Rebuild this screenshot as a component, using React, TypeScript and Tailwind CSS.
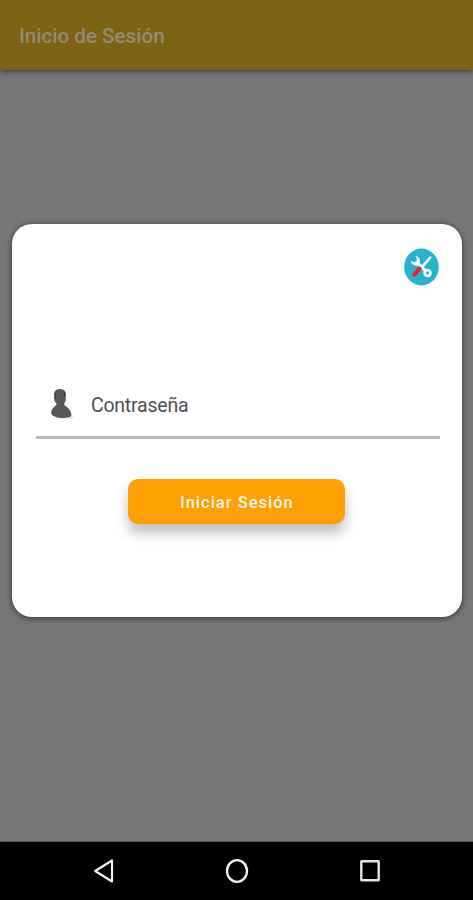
import React, { useState } from 'react'

interface LoginCardProps {
  onSubmit?: (password: string) => void
}

function ToolsIcon() {
  return (
    <svg width="35" height="38" viewBox="0 0 35 38" fill="none">
      <ellipse cx="17.5" cy="19" rx="17.3" ry="18.5" fill="#28b2cc" />
      {/* Screwdriver */}
      <path d="M26.2 9.6L17.5 19.6" stroke="#f4fbfd" strokeWidth="2.6" strokeLinecap="round" />
      {/* Wrench */}
      <path d="M12.5 13.8L22 23.4" stroke="#f4fbfd" strokeWidth="3.2" />
      <path
        d="M11.4 7.9C15.2 8.4 17 11.9 15.5 15.4L13.8 17.4C10.6 18.4 7.2 16.4 6.8 12.8L10 14.2L12.6 13L12.9 10.5Z"
        fill="#f4fbfd"
      />
      <circle cx="23.6" cy="25" r="2.9" stroke="#f4fbfd" strokeWidth="2.8" />
      <path d="M15.6 20.8L10.2 26.6" stroke="#df2b30" strokeWidth="4.2" strokeLinecap="round" />
    </svg>
  )
}

function UserIcon() {
  return (
    <svg width="24" height="32" viewBox="0 0 24 32">
      <path
        d="M10 1C6.4 1 4.2 2.6 4.2 6V11C4.4 13 5.2 14.4 6.4 15.4V17C4 18.8 1.8 20.6 1.3 24C1.1 26 1.6 27.2 3.5 28C7.5 30.2 12 30.6 16 29.8C19 29.4 21.4 29 21.4 27.2C21.2 22.8 18.6 20 14.8 17.8L14.2 15.6C15.2 14 15.8 12.6 15.8 10V6C15.6 2.6 13.6 1 10 1Z"
        fill="#585858"
      />
      <path d="M5.2 10.5V5.6C5.7 4.6 6.3 4 7.2 3.4M14.6 4.4V8" stroke="#333333" fill="none" />
      <path d="M17 30.4C19.5 30.2 22 29.6 23.4 28" stroke="#cfcfcf" fill="none" />
    </svg>
  )
}

function LoginCard({ onSubmit }: LoginCardProps) {
  const [password, setPassword] = useState('')

  const handleSubmit = (e: React.FormEvent) => {
    e.preventDefault()

    if (onSubmit) {
      onSubmit(password)
    }
  }

  return (
    <form
      onSubmit={handleSubmit}
      className="w-[450px] h-[393px] pl-[23.5px] pr-[22.5px] bg-white rounded-[20px] flex flex-col shadow-[0_1px_5px_1px_rgba(0,0,0,0.45)]"
    >
      <div className="flex justify-end pt-6 pr-[1px]">
        <button type="button" aria-label="Configuración">
          <ToolsIcon />
        </button>
      </div>

      {/* Password */}
      <label className="mt-[90px] h-[63.5px] pl-[14px] flex items-start border-b-[3px] border-[#b8b8b8]">
        <span className="mt-[12px]">
          <UserIcon />
        </span>
        <input
          type="password"
          value={password}
          onChange={(e) => setPassword(e.target.value)}
          placeholder="Contraseña"
          className="mt-[16px] ml-[17px] h-7 flex-1 text-[19.5px] tracking-[-0.2px] text-[#505050] placeholder:text-[#505050] placeholder:opacity-100 focus:outline-none"
        />
      </label>

      <button
        type="submit"
        className="mt-[40px] mr-[2px] pt-[3px] self-center w-[217px] h-[45px] rounded-[10px] bg-[#ff9f03] text-[#fff8ea] text-[16.5px] font-medium tracking-[1px] shadow-[0_9px_13px_rgba(0,0,0,0.26)]"
      >
        Iniciar Sesión
      </button>
    </form>
  )
}

function NavigationBar() {
  return (
    <nav className="h-[58px] bg-black flex items-center justify-between pl-[92px] pr-[91px]">
      <svg width="24" height="28" viewBox="0 0 24 28" fill="none" stroke="#f2f2f2" strokeWidth="2.2">
        <path d="M20 3.5V24.5L3.2 14Z" strokeLinejoin="round" />
      </svg>
      <svg width="24" height="28" viewBox="0 0 24 28" fill="none" stroke="#f2f2f2" strokeWidth="2.3">
        <ellipse cx="12" cy="14" rx="10" ry="10.8" />
      </svg>
      <svg width="24" height="28" viewBox="0 0 24 28" fill="none" stroke="#e6e6e6" strokeWidth="2.4">
        <rect x="3.3" y="4.3" width="17.4" height="19" rx="0.5" />
      </svg>
    </nav>
  )
}

function App() {
  return (
    <div className="w-full h-[900px] flex flex-col bg-[#767676] font-[Roboto,sans-serif]">
      <header className="h-[70px] shrink-0 pl-[19px] pt-[2px] flex items-center bg-[#7e6216] shadow-[0_2px_5px_rgba(0,0,0,0.45)]">
        <h1 className="text-[20.6px] font-medium text-[#938a78]">Inicio de Sesión</h1>
      </header>

      <main className="flex-1 pt-[153.5px] pl-[12.4px] border-b border-[#5c5c5c]">
        <LoginCard />
      </main>

      <NavigationBar />
    </div>
  )
}

export default App
